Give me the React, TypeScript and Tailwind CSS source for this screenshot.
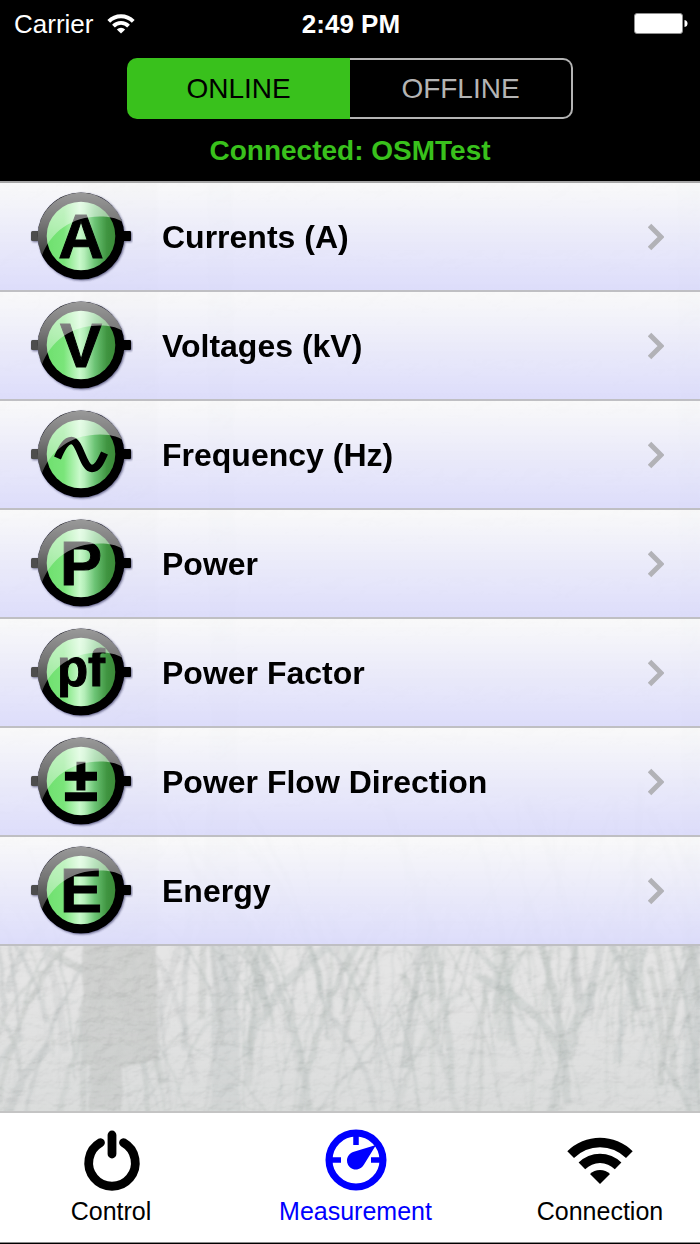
import { ReactNode } from 'react';
import clsx from 'clsx';

type Measurement = { id: string; label: string; symbol: string; size?: number; baseline?: number };

const measurements: Measurement[] = [
  { id: 'currents', label: 'Currents (A)', symbol: 'A' },
  { id: 'voltages', label: 'Voltages (kV)', symbol: 'V' },
  { id: 'frequency', label: 'Frequency (Hz)', symbol: 'wave' },
  { id: 'power', label: 'Power', symbol: 'P' },
  { id: 'power-factor', label: 'Power Factor', symbol: 'pf', size: 51, baseline: 14 },
  { id: 'power-flow', label: 'Power Flow Direction', symbol: '±', size: 59, baseline: 19 },
  { id: 'energy', label: 'Energy', symbol: 'E' },
];

// small seeded generator, so that the reeds stay the same on every render
function createRandom(seed: number) {
  let state = seed;
  return () => {
    state = (state * 1664525 + 1013904223) % 4294967296;
    return state / 4294967296;
  };
}

const random = createRandom(42);

const reeds = Array.from({ length: 230 }, () => {
  const x = random() * 860 - 80;
  const y = 800 + random() * 180;
  const lean = (random() - 0.5) * 190;
  const height = 70 + random() * 170;
  return {
    d: `M${x} ${y}Q${x + lean * 0.2} ${y - height * 0.6} ${x + lean} ${y - height}`,
    width: 1 + random() * random() * 9,
    opacity: 0.2 + random() * 0.3,
  };
});

function WallBackground() {
  return (
    <svg
      className="absolute inset-0 h-full w-full"
      viewBox="0 0 700 930"
      preserveAspectRatio="xMidYMax slice"
      aria-hidden="true"
    >
      <defs>
        <filter id="plaster" x="0" y="0" width="100%" height="100%" colorInterpolationFilters="sRGB">
          <feTurbulence type="fractalNoise" baseFrequency="0.05 0.07" numOctaves="4" seed="7" result="noise" />
          <feDiffuseLighting in="noise" surfaceScale="5" diffuseConstant="0.62" lightingColor="#fff">
            <feDistantLight azimuth="240" elevation="56" />
          </feDiffuseLighting>
        </filter>
        <filter id="rough" x="-5%" y="-5%" width="110%" height="110%">
          <feTurbulence type="fractalNoise" baseFrequency="0.05" numOctaves="2" seed="3" />
          <feDisplacementMap in="SourceGraphic" scale="5" xChannelSelector="R" yChannelSelector="G" />
          <feGaussianBlur stdDeviation="0.8" />
        </filter>
        <linearGradient id="undergrowth" x1="0" y1="0" x2="0" y2="1">
          <stop offset="0" stopColor="#c6cbca" stopOpacity="0" />
          <stop offset="1" stopColor="#c6cbca" stopOpacity="0.35" />
        </linearGradient>
      </defs>
      <rect width="700" height="930" fill="#e4e4e4" />
      <g filter="url(#rough)">
        <path d="M208 0H232L240 930H212Z" fill="#cdd1d0" opacity="0.6" />
        <path d="M493 760H513V860H497Z" fill="#cdd1d0" opacity="0.5" />
        <path d="M678 0H700V930H684Z" fill="#cdd1d0" opacity="0.6" />
        <g fill="none" stroke="#bdc3c1">
          {reeds.map(({ d, width, opacity }) => (
            <path key={d} d={d} strokeWidth={width} opacity={opacity} />
          ))}
        </g>
        <path d="M82 0H157V878L122 888V930H90V885H82Z" fill="#cbcccb" opacity="0.85" />
      </g>
      <rect y="800" width="700" height="130" fill="url(#undergrowth)" />
      <rect width="700" height="930" filter="url(#plaster)" opacity="0.4" className="mix-blend-soft-light" />
    </svg>
  );
}

function WifiIcon({ className }: { className?: string }) {
  return (
    <svg className={className} viewBox="-33 -47 66 48" fill="currentColor" aria-hidden="true">
      <path d="M-32.7-32.7A46.3 46.3 0 0 1 32.7-32.7L26-26A36.7 36.7 0 0 0-26-26Z" />
      <path d="M-21.4-21.4A30.3 30.3 0 0 1 21.4-21.4L14.8-14.8A21 21 0 0 0-14.8-14.8Z" />
      <path d="M-10-10A14.3 14.3 0 0 1 10-10L0 0Z" />
    </svg>
  );
}

function BatteryIcon() {
  return (
    <svg className="h-[22px] w-[54px]" viewBox="0 0 54 22" aria-hidden="true">
      <rect x="0.5" y="0.5" width="48" height="20" rx="2.5" fill="#fff" stroke="#8e8e8e" />
      <path d="M50.5 7C53 7.500 53.500 9 53.500 10.500S53 13.500 50.500 14Z" fill="#fff" />
    </svg>
  );
}

function PowerIcon() {
  return (
    <svg className="size-16" viewBox="-33 -34 64 64" fill="none" stroke="currentColor" strokeWidth="8.800" strokeLinecap="round" aria-hidden="true">
      <path d="M-11.500-20.300A23.300 23.300 0 1 0 11.500-20.300" />
      <path d="M0-28V-9" />
    </svg>
  );
}

function GaugeIcon() {
  return (
    <svg className="size-16" viewBox="-32 -31 64 64" aria-hidden="true">
      <circle r="27" fill="none" stroke="currentColor" strokeWidth="7" />
      <path d="M0-27V-15M-27 0H-15M27 0H15" stroke="currentColor" strokeWidth="5.500" />
      <path d="M20-15L8 4.500A9 9 0 1 1-3-8Z" fill="currentColor" />
    </svg>
  );
}

function BadgeDefs() {
  return (
    <svg className="absolute size-0" aria-hidden="true">
      <defs>
        <linearGradient id="badge-green">
          <stop offset="0" stopColor="#6fe06f" />
          <stop offset="0.25" stopColor="#7ae57a" />
          <stop offset="0.48" stopColor="#c9f9cb" />
          <stop offset="0.55" stopColor="#b4eeb8" />
          <stop offset="0.7" stopColor="#6cc475" />
          <stop offset="0.88" stopColor="#3f9440" />
          <stop offset="1" stopColor="#3b8a38" />
        </linearGradient>
        <linearGradient id="badge-gloss" x1="0" y1="0" x2="0" y2="1">
          <stop offset="0" stopColor="#fff" stopOpacity="0.6" />
          <stop offset="0.5" stopColor="#fff" stopOpacity="0.46" />
          <stop offset="1" stopColor="#fff" stopOpacity="0.24" />
        </linearGradient>
        <filter id="badge-shadow" x="-20%" y="-20%" width="140%" height="140%">
          <feDropShadow dx="1" dy="1" stdDeviation="1" floodColor="#33335c" floodOpacity="0.7" />
        </filter>
        <filter id="badge-soft">
          <feGaussianBlur stdDeviation="0.7" />
        </filter>
      </defs>
    </svg>
  );
}

function MeterBadge({ symbol, size = 63, baseline = 22 }: Pick<Measurement, 'symbol' | 'size' | 'baseline'>) {
  return (
    <svg className="h-[92px] w-[104px] shrink-0" viewBox="-52 -45 104 92" aria-hidden="true">
      <g filter="url(#badge-shadow)">
        <rect x="-50" y="-5" width="10" height="10" rx="1.500" fill="#4d4d4d" />
        <rect x="40" y="-5" width="10" height="10" rx="1" />
        <circle r="43.500" />
      </g>
      <circle r="34.300" fill="url(#badge-green)" filter="url(#badge-soft)" />
      {symbol === 'wave' ? (
        <path
          d="M-23.500 4C-19-7-15-13.500-9.500-13.500C-1-13.500 2 14.500 11 14.500C17 14.500 20 7 23.500-1"
          fill="none"
          stroke="#000"
          strokeWidth="7.500"
        />
      ) : (
        <text
          y={baseline}
          fontSize={size}
          textAnchor="middle"
          stroke="#000"
          strokeWidth={symbol === '±' ? 2.5 : 1}
          className="font-['Liberation_Sans',sans-serif] font-bold"
        >
          {symbol}
        </text>
      )}
      <path
        d="M-39 19.300C-30-4-10-19.500 19-19.500C28-19.500 35-18 41-14.600A43.500 43.500 0 1 0-39 19.300Z"
        fill="url(#badge-gloss)"
      />
    </svg>
  );
}

function StatusBar() {
  return (
    <div className="grid grid-cols-3 items-center pt-2 pr-3 pl-[14px] text-[26px] leading-8 text-white">
      <div className="flex items-center gap-[14px]">
        <span>Carrier</span>
        <WifiIcon className="h-5 w-7" />
      </div>
      <time className="text-center font-bold">2:49 PM</time>
      <div className="flex justify-end">
        <BatteryIcon />
      </div>
    </div>
  );
}

function MeasurementRow({ id, label, ...badge }: Measurement) {
  return (
    <li>
      <a
        href={`#${id}`}
        className="flex h-[109px] items-center gap-[29px] border-b-2 border-[#bfbfc3] bg-linear-to-b from-[#fbfbfb]/90 to-[#dcdcfb]/95 pr-9 pl-[29px]"
      >
        <MeterBadge {...badge} />
        <span className="flex-1 text-[32px] font-bold text-black">{label}</span>
        <svg className="h-7 w-4" viewBox="0 0 16 28" fill="none" stroke="#b2b2b7" strokeWidth="5" aria-hidden="true">
          <path d="M1.500 2.500L13 14L1.500 25.500" />
        </svg>
      </a>
    </li>
  );
}

function TabLink({ href, label, active, children }: { href: string; label: string; active?: boolean; children: ReactNode }) {
  return (
    <a
      href={href}
      aria-current={active ? 'page' : undefined}
      className={clsx('flex w-[200px] flex-col items-center gap-1', active ? 'text-[#0000ff]' : 'text-black')}
    >
      <span className="flex h-16 items-center">{children}</span>
      <span className="text-[25px] leading-7">{label}</span>
    </a>
  );
}

export default function App() {
  return (
    <div className="flex min-h-screen flex-col bg-black font-['Liberation_Sans',Arial,sans-serif]">
      <header className="flex flex-col pb-[14px]">
        <StatusBar />
        <div className="mx-auto mt-[18px] flex h-[61px] w-[446px] max-w-full text-[28px]">
          <button type="button" aria-pressed="true" className="w-1/2 rounded-l-[10px] bg-[#39c11c] text-black">
            ONLINE
          </button>
          <button type="button" aria-pressed="false" className="w-1/2 rounded-r-[10px] border-2 border-l-0 border-[#b4b4b4] text-[#b4b4b4]">
            OFFLINE
          </button>
        </div>
        <p className="mt-4 text-center text-[28px] leading-8 font-bold text-[#39c11c]">Connected: OSMTest</p>
      </header>

      <main className="relative flex-1 overflow-hidden bg-[#dedede]">
        <WallBackground />
        <BadgeDefs />
        <ul className="relative border-t-2 border-[#a5a5a5]">
          {measurements.map((item) => (
            <MeasurementRow key={item.id} {...item} />
          ))}
        </ul>
      </main>

      <nav className="mb-px flex justify-between border-t-2 border-b border-t-[#c4c4c4] border-b-[#8a8a8a] bg-white pt-4 pb-[17px] pl-[11px]">
        <TabLink href="#control" label="Control">
          <PowerIcon />
        </TabLink>
        <TabLink href="#measurement" label="Measurement" active>
          <GaugeIcon />
        </TabLink>
        <TabLink href="#connection" label="Connection">
          <WifiIcon className="h-12 w-[66px]" />
        </TabLink>
      </nav>
    </div>
  );
}
